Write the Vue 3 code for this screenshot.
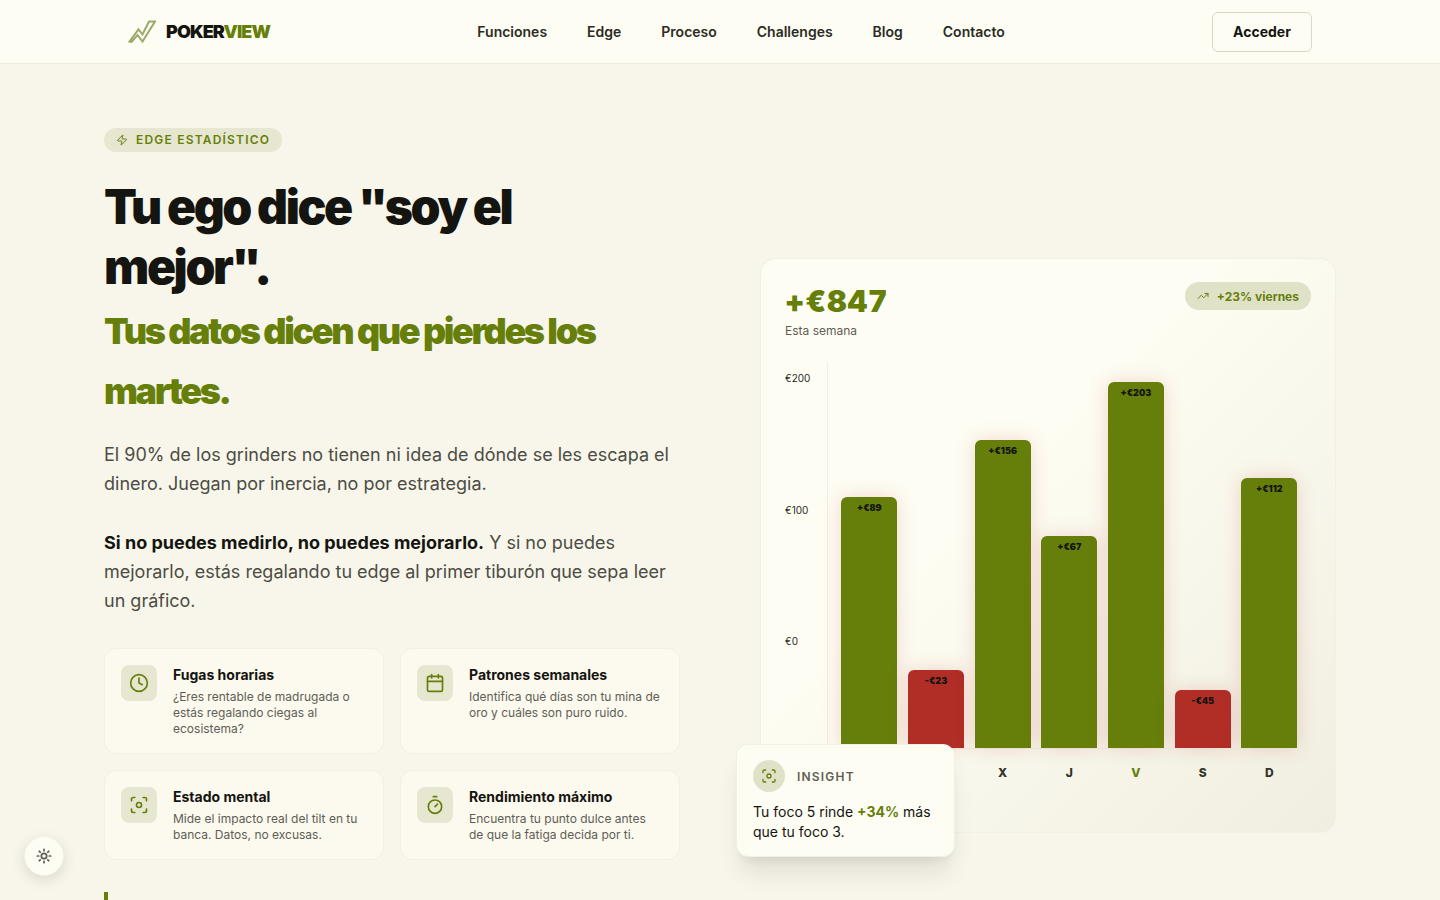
<script setup>
const links = ['Funciones', 'Edge', 'Proceso', 'Challenges', 'Blog', 'Contacto']

const features = [
  { icon: 'clock', title: 'Fugas horarias', text: '¿Eres rentable de madrugada o estás regalando ciegas al ecosistema?' },
  { icon: 'calendar', title: 'Patrones semanales', text: 'Identifica qué días son tu mina de oro y cuáles son puro ruido.' },
  { icon: 'focus', title: 'Estado mental', text: 'Mide el impacto real del tilt en tu banca. Datos, no excusas.' },
  { icon: 'timer', title: 'Rendimiento máximo', text: 'Encuentra tu punto dulce antes de que la fatiga decida por ti.' },
]

const yLabels = ['€200', '€100', '€0', '-€100']

const days = [
  { day: 'L', value: '+€89', height: 251 },
  { day: 'M', value: '-€23', height: 78, loss: true },
  { day: 'X', value: '+€156', height: 308 },
  { day: 'J', value: '+€67', height: 212 },
  { day: 'V', value: '+€203', height: 366, best: true },
  { day: 'S', value: '-€45', height: 58, loss: true },
  { day: 'D', value: '+€112', height: 270 },
]
</script>

<template>
  <div class="page">
    <header class="topbar">
      <div class="topbar-inner">
        <a class="logo">
          <svg class="logo-icon" viewBox="0 0 28 24" fill="none" stroke="#9aa96a" stroke-width="2" stroke-linejoin="miter">
            <path d="M1.500 21.500 10.500 9.500l4 5L21 1.500h6L14.500 21.500l-5-6.500-6 7Z" />
          </svg>
          <span>POKER<em>VIEW</em></span>
        </a>
        <nav class="nav">
          <a v-for="l in links" :key="l">{{ l }}</a>
        </nav>
        <button class="login">Acceder</button>
      </div>
    </header>

    <main class="hero">
      <section class="left">
        <div class="badge">
          <svg viewBox="0 0 24 24" fill="none" stroke="currentColor" stroke-width="2" stroke-linejoin="round" stroke-linecap="round">
            <path d="M4 14a1 1 0 0 1-.78-1.630l9.900-10.200a.5.5 0 0 1 .86.46l-1.920 6.020A1 1 0 0 0 13 10h7a1 1 0 0 1 .78 1.630l-9.900 10.200a.5.5 0 0 1-.86-.46l1.920-6.020A1 1 0 0 0 11 14z" />
          </svg>
          <span>EDGE ESTADÍSTICO</span>
        </div>
        <h1>Tu ego dice "soy el mejor".<span>Tus datos dicen que pierdes los martes.</span></h1>
        <p class="lead">El 90% de los grinders no tienen ni idea de dónde se les escapa el dinero. Juegan por inercia, no por estrategia.</p>
        <p class="lead second"><strong>Si no puedes medirlo, no puedes mejorarlo.</strong> Y si no puedes mejorarlo, estás regalando tu edge al primer tiburón que sepa leer un gráfico.</p>

        <div class="features">
          <article v-for="f in features" :key="f.title" class="feature">
            <div class="feature-icon">
              <svg viewBox="0 0 24 24" fill="none" stroke="currentColor" stroke-width="2" stroke-linecap="round" stroke-linejoin="round">
                <template v-if="f.icon === 'clock'">
                  <circle cx="12" cy="12" r="10" />
                  <path d="M12 6v6l4 2" />
                </template>
                <template v-else-if="f.icon === 'calendar'">
                  <path d="M8 2v4M16 2v4" />
                  <rect x="3" y="4" width="18" height="18" rx="2" />
                  <path d="M3 10h18" />
                </template>
                <template v-else-if="f.icon === 'focus'">
                  <circle cx="12" cy="12" r="3" />
                  <path d="M3 7V5a2 2 0 0 1 2-2h2M17 3h2a2 2 0 0 1 2 2v2M21 17v2a2 2 0 0 1-2 2h-2M7 21H5a2 2 0 0 1-2-2v-2" />
                </template>
                <template v-else>
                  <path d="M10 2h4M12 14l3-3" />
                  <circle cx="12" cy="14" r="8" />
                </template>
              </svg>
            </div>
            <div>
              <h3>{{ f.title }}</h3>
              <p>{{ f.text }}</p>
            </div>
          </article>
        </div>

        <div class="quote"></div>
      </section>

      <section class="right">
        <div class="chart-card">
          <div class="chart-head">
            <div>
              <div class="total">+€847</div>
              <div class="total-label">Esta semana</div>
            </div>
            <div class="trend">
              <svg viewBox="0 0 24 24" fill="none" stroke="currentColor" stroke-width="2" stroke-linecap="round" stroke-linejoin="round">
                <path d="m22 7-8.500 8.500-5-5L2 17" />
                <path d="M16 7h6v6" />
              </svg>
              +23% viernes
            </div>
          </div>

          <div class="chart">
            <div class="y-axis">
              <span v-for="y in yLabels" :key="y">{{ y }}</span>
            </div>
            <div class="plot">
              <div class="bars">
                <div v-for="d in days" :key="d.day" class="bar" :class="{ loss: d.loss }" :style="{ height: d.height + 'px' }">
                  {{ d.value }}
                </div>
              </div>
              <div class="days">
                <span v-for="d in days" :key="d.day" :class="{ best: d.best }">{{ d.day }}</span>
              </div>
            </div>
          </div>
        </div>

        <div class="insight">
          <div class="insight-head">
            <div class="insight-icon">
              <svg viewBox="0 0 24 24" fill="none" stroke="currentColor" stroke-width="2" stroke-linecap="round" stroke-linejoin="round">
                <circle cx="12" cy="12" r="3" />
                <path d="M3 7V5a2 2 0 0 1 2-2h2M17 3h2a2 2 0 0 1 2 2v2M21 17v2a2 2 0 0 1-2 2h-2M7 21H5a2 2 0 0 1-2-2v-2" />
              </svg>
            </div>
            <span>INSIGHT</span>
          </div>
          <p>Tu foco 5 rinde <b>+34%</b> más que tu foco 3.</p>
        </div>
      </section>
    </main>

    <button class="theme">
      <svg viewBox="0 0 24 24" fill="none" stroke="currentColor" stroke-width="2.600" stroke-linecap="round" stroke-linejoin="round">
        <circle cx="12" cy="12" r="4" />
        <path d="M12 2v2M12 20v2M4.930 4.930l1.410 1.410M17.660 17.660l1.410 1.410M2 12h2M20 12h2M6.340 17.660l-1.410 1.410M19.070 4.930l-1.410 1.410" />
      </svg>
    </button>
  </div>
</template>

<style>
html, body {
  margin: 0;
  background: #f8f6ea;
  overflow: hidden;
}
</style>

<style scoped>
.page {
  font-family: Inter, "Liberation Sans", sans-serif;
  color: #141410;
  background: #f8f6ea;
  min-height: 900px;
}

.topbar {
  height: 64px;
  box-sizing: border-box;
  background: #fefdf3;
  border-bottom: 1px solid #ecebe0;
}
.topbar-inner {
  width: 1184px;
  height: 63px;
  margin: 0 auto;
  display: flex;
  align-items: center;
  justify-content: space-between;
}
.logo {
  display: flex;
  align-items: center;
  gap: 10px;
  font-size: 18px;
  font-weight: 900;
  letter-spacing: -0.05em;
}
.logo em {
  font-style: normal;
  color: #667f0a;
}
.logo-icon {
  width: 28px;
  height: 24px;
}
.nav {
  display: flex;
  gap: 40px;
  font-size: 14px;
  font-weight: 600;
  color: #2b2b25;
}
.login {
  width: 100px;
  height: 40px;
  border: 1px solid #d9d8cc;
  border-radius: 6px;
  background: #fefdf3;
  color: #141410;
  font-family: inherit;
  font-size: 14px;
  font-weight: 700;
}

.hero {
  width: 1232px;
  margin: 0 auto;
  padding-top: 64px;
  display: grid;
  grid-template-columns: 576px 576px;
  gap: 80px;
  align-items: center;
}

.badge {
  display: inline-flex;
  align-items: center;
  gap: 8px;
  height: 24px;
  padding: 0 12px;
  border-radius: 12px;
  background: #e7e7d1;
  color: #667f0a;
  font-size: 12px;
  font-weight: 600;
  letter-spacing: 0.1em;
  vertical-align: top;
}
.badge span {
  padding-bottom: 2px;
}
.badge svg {
  width: 12px;
  height: 12px;
}

h1 {
  margin: 25px 0 0;
  font-size: 48px;
  line-height: 60px;
  font-weight: 900;
  letter-spacing: -0.05em;
  color: #141410;
}
h1 span {
  display: block;
  margin-top: 4px;
  font-size: 36px;
  color: #667f0a;
}

.lead {
  margin: 19px 0 0;
  font-size: 18px;
  line-height: 29.25px;
  color: #4c4c44;
}
.lead.second {
  margin-top: 29px;
}
.lead strong {
  color: #141410;
  font-weight: 700;
}

.features {
  margin-top: 33px;
  display: grid;
  grid-template-columns: 1fr 1fr;
  gap: 16px;
}
.feature {
  display: flex;
  gap: 16px;
  padding: 16px;
  border: 1px solid #f2f0e4;
  border-radius: 12px;
  background: #fcf9ef;
}
.feature-icon {
  flex: none;
  width: 36px;
  height: 36px;
  border-radius: 8px;
  background: #e7e7d1;
  color: #667f0a;
  display: flex;
  align-items: center;
  justify-content: center;
}
.feature-icon svg {
  width: 20px;
  height: 20px;
}
.feature h3 {
  margin: 0 0 4px;
  font-size: 14px;
  line-height: 20px;
  font-weight: 700;
}
.feature p {
  margin: 0;
  font-size: 12px;
  line-height: 16px;
  color: #5e5e55;
}

.quote {
  margin-top: 32px;
  height: 71px;
  border-left: 4px solid #667f0a;
}

.right {
  position: relative;
}
.chart-card {
  box-sizing: border-box;
  height: 575px;
  padding: 23px 24px 24px;
  border: 1px solid #f2f0e4;
  border-radius: 16px;
  background: linear-gradient(135deg, #fefdf3 40%, #f0eee0 100%);
}
.chart-head {
  display: flex;
  justify-content: space-between;
  align-items: flex-start;
}
.total {
  padding-top: 2px;
  font-size: 30px;
  line-height: 35px;
  font-weight: 900;
  letter-spacing: 1px;
  color: #667f0a;
  font-variant-numeric: tabular-nums;
}
.total-label {
  margin-top: 4px;
  font-size: 12px;
  line-height: 16px;
  color: #5e5e55;
}
.trend {
  display: flex;
  align-items: center;
  gap: 8px;
  height: 28px;
  padding: 0 12px;
  border-radius: 14px;
  background: #e0e2c8;
  color: #667f0a;
  font-size: 12px;
  font-weight: 700;
}
.trend svg {
  width: 12px;
  height: 12px;
}

.chart {
  margin-top: 23px;
  display: flex;
}
.y-axis {
  width: 42px;
  height: 411px;
  padding-top: 8px;
  box-sizing: border-box;
  display: flex;
  flex-direction: column;
  gap: 115.5px;
  font-size: 10px;
  line-height: 16px;
  color: #2b2b25;
}
.plot {
  flex: 1;
}
.bars {
  height: 386px;
  padding: 0 13.67px 0 13.33px;
  border-left: 1px solid #f0efe3;
  border-bottom: 1px solid #f0efe3;
  display: flex;
  justify-content: space-between;
  align-items: flex-end;
}
.bar {
  width: 56px;
  box-sizing: border-box;
  padding-top: 5px;
  border-radius: 6px 6px 0 0;
  background: #667f0a;
  box-shadow: 0 0 20px rgba(176, 46, 38, 0.18);
  text-align: center;
  font-size: 9px;
  line-height: 12px;
  font-weight: 900;
  color: #141410;
}
.bar.loss {
  background: #b02e26;
}
.days {
  display: flex;
  justify-content: space-between;
  padding: 16px 13.67px 0 14.33px;
  font-size: 12px;
  line-height: 16px;
  font-weight: 800;
  color: #33332c;
}
.days span {
  width: 56px;
  text-align: center;
}
.days .best {
  color: #667f0a;
}

.insight {
  position: absolute;
  left: -24px;
  bottom: -24px;
  width: 219px;
  height: 113px;
  box-sizing: border-box;
  padding: 15px 16px 16px;
  border: 1px solid #f2f0e4;
  border-radius: 12px;
  background: #fefdf3;
  box-shadow: 0 20px 25px -5px rgba(20, 20, 16, 0.1), 0 8px 10px -6px rgba(20, 20, 16, 0.08);
}
.insight-head {
  display: flex;
  align-items: center;
  gap: 12px;
  font-size: 12px;
  font-weight: 600;
  letter-spacing: 0.1em;
  color: #5e5e55;
}
.insight-icon {
  width: 32px;
  height: 32px;
  border-radius: 50%;
  background: #e0e2c8;
  color: #667f0a;
  display: flex;
  align-items: center;
  justify-content: center;
}
.insight-icon svg {
  width: 16px;
  height: 16px;
}
.insight p {
  margin: 10px 0 0;
  font-size: 14px;
  line-height: 20px;
  font-weight: 400;
}
.insight b {
  color: #667f0a;
  font-weight: 700;
}

.theme {
  position: fixed;
  left: 24px;
  top: 836px;
  width: 40px;
  height: 40px;
  padding: 0;
  border: 1px solid #f2f0e4;
  border-radius: 50%;
  background: #fefdf3;
  color: #5e5e55;
  box-shadow: 0 4px 14px rgba(20, 20, 16, 0.12);
  display: flex;
  align-items: center;
  justify-content: center;
}
.theme svg {
  width: 16px;
  height: 16px;
}
</style>
